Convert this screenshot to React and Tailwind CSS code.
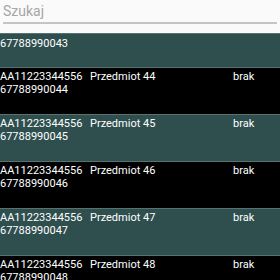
const items = [44, 45, 46, 47, 48];

const Row = ({ n, index }) => {
  const bg = index % 2 === 0 ? 'bg-black' : 'bg-[#2f4f4f]';
  return (
    <div className={`h-[47px] shrink-0 border-t border-[#587272] ${bg} text-white text-[11px] leading-[13px] pt-[2px]`}>
      <div className="flex">
        <span className="w-[90px]">AA11223344556</span>
        <span className="w-[143px]">Przedmiot {n}</span>
        <span>brak</span>
      </div>
      <div>677889900{n}</div>
    </div>
  );
};

const App = () => {
  return (
    <div className="w-[280px] h-[280px] overflow-hidden bg-[#fafafa] flex flex-col" style={{ fontFamily: 'Roboto, sans-serif' }}>
      <div className="h-[33px] px-[3px] pt-[1px] shrink-0">
        <div className="text-[14px] leading-[20px] text-[#a6a6a6] h-[21px]">Szukaj</div>
        <div className="h-[2px] bg-[#c4c4c4]" />
      </div>
      <div className="h-[34px] shrink-0 border-t border-[#587272] bg-[#2f4f4f] text-white text-[11px] leading-[13px] pt-[3px]">
        67788990043
      </div>
      {items.map((n, i) => (
        <Row key={n} n={n} index={i} />
      ))}
    </div>
  );
};

export default App;
